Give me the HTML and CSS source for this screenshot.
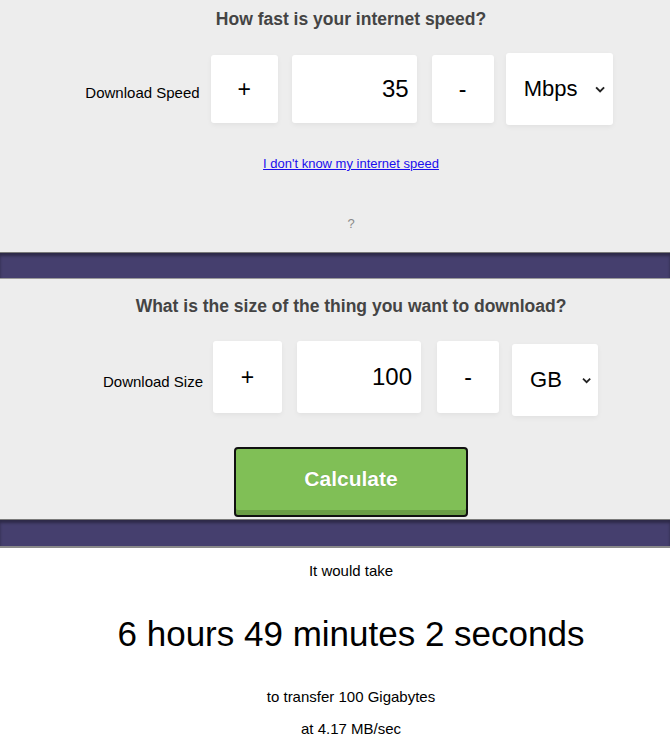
FILE: index.html
```html
<!DOCTYPE html>
<html>
<head>
<meta charset="utf-8">
<title>Download time calculator</title>
<link rel="stylesheet" href="styles.css">
</head>
<body>
<section class="panel panel-speed">
  <h2 class="panel-title">How fast is your internet speed?</h2>
  <div class="control-row">
    <label class="row-label">Download Speed</label>
    <button class="step-btn step-btn-a">+</button>
    <input class="value-input value-input-a" type="text" value="35">
    <button class="step-btn step-btn-minus-a">-</button>
    <div class="unit-select unit-select-a">
      <span>Mbps</span>
      <svg class="chev" width="11" height="7" viewBox="0 0 11 7"><path d="M1.2 1.2 L5.5 5.5 L9.8 1.2" fill="none" stroke="#222" stroke-width="2.1"/></svg>
    </div>
  </div>
  <a class="speed-link" href="#">I don't know my internet speed</a>
  <p class="question-mark">?</p>
</section>
<div class="band"></div>
<section class="panel panel-size">
  <h2 class="panel-title">What is the size of the thing you want to download?</h2>
  <div class="control-row control-row-b">
    <label class="row-label">Download Size</label>
    <button class="step-btn step-btn-b">+</button>
    <input class="value-input value-input-b" type="text" value="100">
    <button class="step-btn step-btn-minus-b">-</button>
    <div class="unit-select unit-select-b">
      <span>GB</span>
      <svg class="chev" width="11" height="7" viewBox="0 0 11 7"><path d="M1.2 1.2 L5.5 5.5 L9.8 1.2" fill="none" stroke="#222" stroke-width="2.1"/></svg>
    </div>
  </div>
  <button class="calc-btn">Calculate</button>
</section>
<div class="band band-b"></div>
<section class="result">
  <p class="result-small result-intro">It would take</p>
  <p class="result-big">6 hours 49 minutes 2 seconds</p>
  <p class="result-small result-transfer">to transfer 100 Gigabytes</p>
  <p class="result-small result-rate">at 4.17 MB/sec</p>
</section>
</body>
</html>
```

FILE: styles.css
```css
* { box-sizing: border-box; }
html, body {
  margin: 0;
  padding: 0;
  background: #fff;
  font-family: "Liberation Sans", Arial, sans-serif;
  color: #000;
}
.panel {
  background: #ededed;
  display: flex;
  flex-direction: column;
  align-items: center;
  padding-left: 32px;
}
.panel-speed {
  height: 252px;
  padding-top: 8px;
}
.panel-size {
  height: 240px;
  padding-top: 16px;
}
.panel-title {
  margin: 0;
  font-size: 17.5px;
  line-height: 22px;
  font-weight: bold;
  color: #444;
}
.control-row {
  display: flex;
  align-items: center;
  gap: 13px;
  margin-top: 23px;
  margin-right: 4px;
  height: 72px;
}
.control-row-b {
  margin-top: 24px;
  margin-right: 1px;
  align-items: flex-start;
  height: 75px;
}
.row-label {
  font-size: 15px;
  line-height: 18px;
  margin-top: 8px;
  margin-right: -2px;
  white-space: nowrap;
}
.control-row-b .row-label {
  margin-top: 32px;
  margin-right: -3px;
}
.step-btn, .value-input, .unit-select {
  background: #fff;
  border: none;
  border-radius: 3px;
  box-shadow: 0 2px 5px rgba(0, 0, 0, 0.05);
  font-family: "Liberation Sans", Arial, sans-serif;
  color: #000;
  padding: 0;
  margin: 0;
}
.step-btn {
  font-size: 23px;
  height: 68px;
  display: flex;
  align-items: center;
  justify-content: center;
}
.step-btn-a { width: 67px; }
.step-btn-minus-a { width: 62px; margin-left: 2px; }
.step-btn-b { width: 69px; height: 72px; }
.step-btn-minus-b { width: 62px; height: 72px; margin-left: 3px; }
.value-input {
  font-size: 24px;
  text-align: right;
  padding: 0 8px;
  height: 68px;
  outline: none;
}
.value-input-a { width: 125px; margin-left: 1px; }
.value-input-b { width: 124px; height: 72px; padding-right: 9px; margin-left: 2px; }
.unit-select {
  display: flex;
  align-items: center;
  height: 72px;
  padding: 0 7px 0 18px;
  font-size: 22px;
}
.unit-select .chev { margin-left: 18px; }
.unit-select-a { width: 107px; margin-left: -1px; }
.unit-select-b { width: 86px; margin-top: 3px; }
.unit-select-b .chev { margin-left: 20px; }
.speed-link {
  margin-top: 31px;
  font-size: 13px;
  line-height: 16px;
  color: #1a0dee;
  text-decoration: underline;
}
.question-mark {
  margin: 44px 0 0;
  font-size: 13px;
  line-height: 16px;
  color: #8a8a8a;
}
.calc-btn {
  margin-top: 31px;
  width: 234px;
  height: 70px;
  background: #80bf56;
  border: 2px solid #111;
  border-radius: 4px;
  box-shadow: inset 0 -5px 0 #6a9d45;
  color: #fff;
  font-family: "Liberation Sans", Arial, sans-serif;
  font-weight: bold;
  font-size: 21px;
  padding: 0 0 6px;
  text-shadow: 0 0 1px rgba(0, 0, 0, 0.25);
}
.band {
  height: 27px;
  background: #453f6e;
  border-top: 1px solid #7a7a7a;
  border-bottom: 1px solid #9a9a9a;
  box-shadow: inset 0 3px 3px rgba(0, 0, 0, 0.35);
}
.band-b {
  height: 29px;
  border-bottom: 2px solid #8a8a8a;
}
.result {
  display: flex;
  flex-direction: column;
  align-items: center;
  padding-left: 32px;
}
.result p { margin: 0; }
.result-small {
  font-size: 15px;
  line-height: 18px;
}
.result-intro { margin-top: 14px !important; }
.result-big {
  font-size: 35px;
  line-height: 40px;
  margin-top: 34px !important;
}
.result-transfer { margin-top: 34px !important; }
.result-rate { margin-top: 14px !important; }
```
